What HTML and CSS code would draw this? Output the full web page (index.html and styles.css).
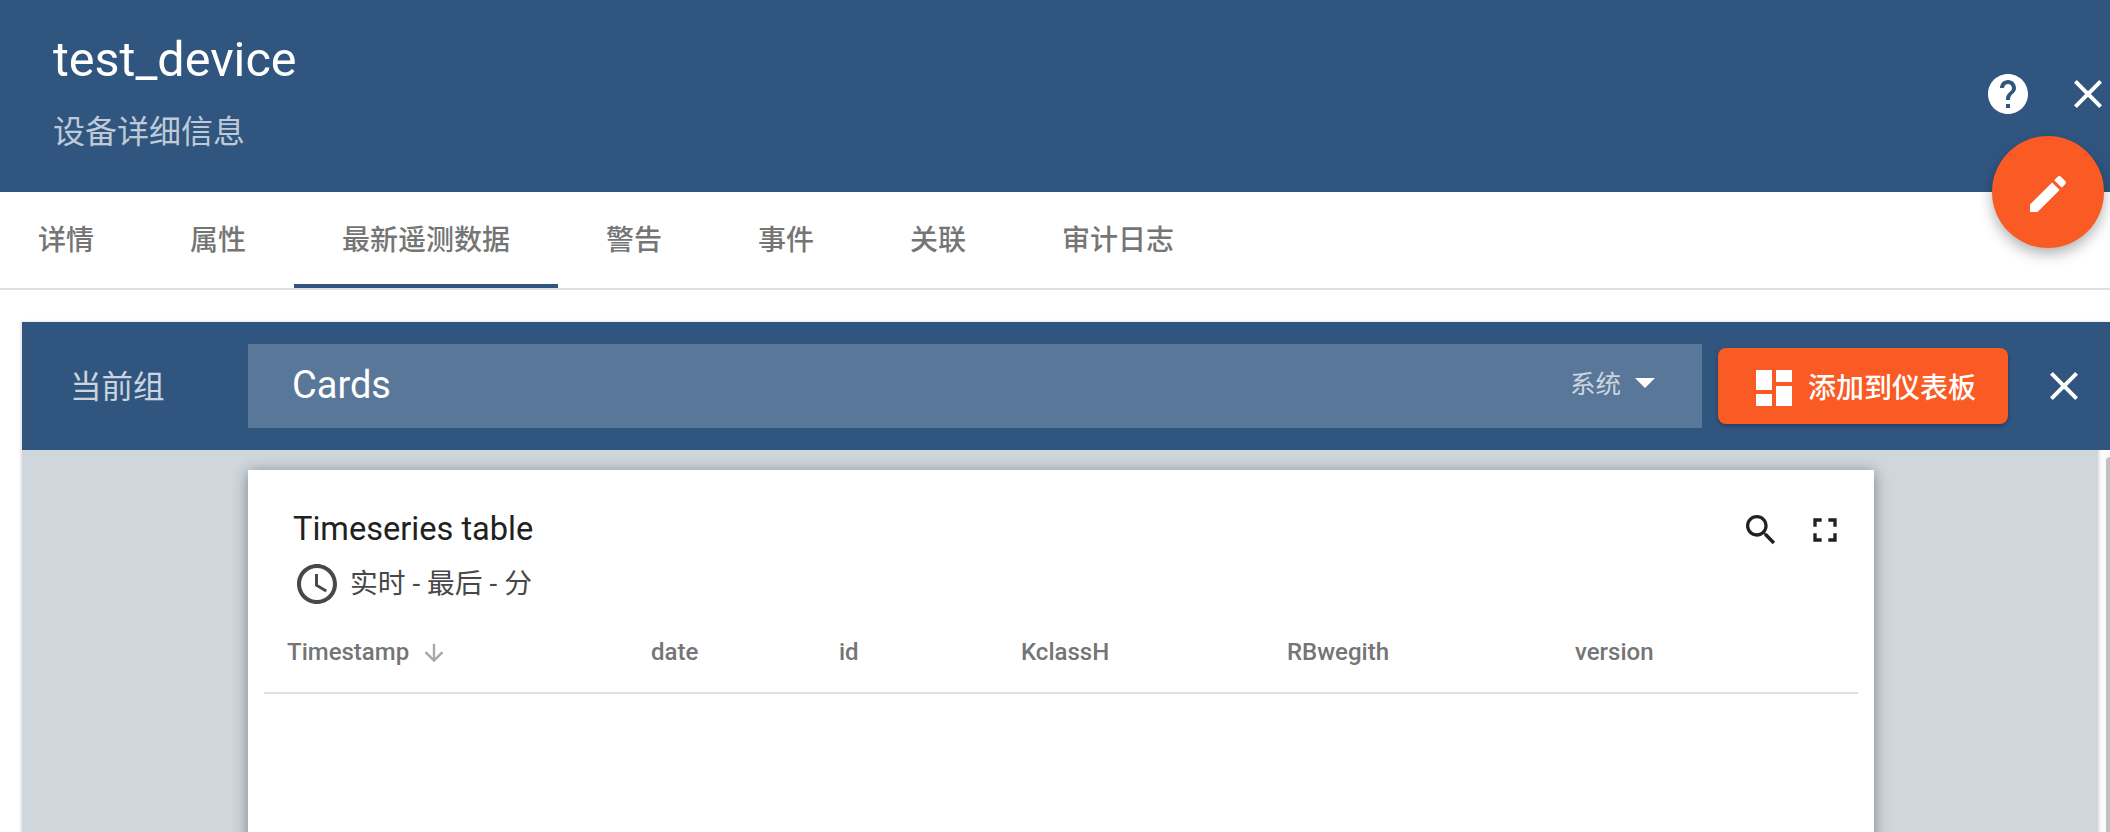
FILE: index.html
```html
<!DOCTYPE html>
<html>
<head>
    <title>test_device</title>
    <link rel="stylesheet" href="styles.css">
</head>
<body>
    <div class="page">
        <header class="header">
            <h1 class="title">test_device</h1>
            <div class="subtitle">设备详细信息</div>
            <div class="header-actions">
                <svg class="icon-48" viewBox="0 0 24 24"><path d="M12 2C6.48 2 2 6.48 2 12s4.48 10 10 10 10-4.48 10-10S17.52 2 12 2zm1 17h-2v-2h2v2zm2.07-7.75l-.9.92C13.45 12.9 13 13.5 13 15h-2v-.5c0-1.1.45-2.1 1.17-2.83l1.24-1.26c.37-.36.59-.86.59-1.41 0-1.1-.9-2-2-2s-2 .9-2 2H8c0-2.21 1.79-4 4-4s4 1.79 4 4c0 .88-.36 1.68-.93 2.25z"/></svg>
                <svg class="icon-48 close-icon" viewBox="0 0 24 24"><path d="M19 6.41L17.59 5 12 10.59 6.41 5 5 6.41 10.59 12 5 17.59 6.41 19 12 13.41 17.59 19 19 17.59 13.41 12z"/></svg>
            </div>
            <button class="fab">
                <svg class="icon-48" viewBox="0 0 24 24"><path d="M3 17.25V21h3.75L17.81 9.94l-3.75-3.75L3 17.25zM20.71 7.04c.39-.39.39-1.02 0-1.41l-2.34-2.34c-.39-.39-1.02-.39-1.41 0l-1.83 1.83 3.75 3.75 1.83-1.83z"/></svg>
            </button>
        </header>

        <nav class="tabs">
            <div class="tab">详情</div>
            <div class="tab">属性</div>
            <div class="tab active">最新遥测数据</div>
            <div class="tab">警告</div>
            <div class="tab">事件</div>
            <div class="tab">关联</div>
            <div class="tab">审计日志</div>
        </nav>

        <section class="panel">
            <div class="toolbar">
                <div class="group-label">当前组</div>
                <div class="group-select">
                    <span class="group-name">Cards</span>
                    <span class="group-type">系统</span>
                    <span class="caret"></span>
                </div>
                <button class="add-button">
                    <svg class="icon-48 add-icon" viewBox="0 0 24 24"><path d="M3 13h8V3H3v10zm0 8h8v-6H3v6zm10 0h8V11h-8v10zm0-18v6h8V3h-8z"/></svg>
                    <span>添加到仪表板</span>
                </button>
                <svg class="icon-48 toolbar-close" viewBox="0 0 24 24"><path d="M19 6.41L17.59 5 12 10.59 6.41 5 5 6.41 10.59 12 5 17.59 6.41 19 12 13.41 17.59 19 19 17.59 13.41 12z"/></svg>
            </div>
            <div class="content">
                <div class="canvas">
                    <div class="card">
                        <div class="card-head">
                            <div>
                                <div class="card-title">Timeseries table</div>
                                <div class="card-time">
                                    <svg class="icon-48 clock" viewBox="0 0 24 24"><path d="M11.99 2C6.47 2 2 6.48 2 12s4.47 10 9.99 10C17.52 22 22 17.52 22 12S17.52 2 11.99 2zM12 20c-4.42 0-8-3.58-8-8s3.58-8 8-8 8 3.58 8 8-3.58 8-8 8zm.5-13H11v6l5.25 3.15.75-1.23-4.5-2.67z"/></svg>
                                    <span>实时 - 最后 - 分</span>
                                </div>
                            </div>
                            <div class="card-actions">
                                <svg class="icon-40" viewBox="0 0 24 24"><path d="M15.5 14h-.79l-.28-.27C15.41 12.59 16 11.11 16 9.5 16 5.91 13.09 3 9.5 3S3 5.91 3 9.5 5.91 16 9.5 16c1.61 0 3.09-.59 4.23-1.57l.27.28v.79l5 4.99L20.49 19l-4.99-5zm-6 0C7.01 14 5 11.99 5 9.5S7.01 5 9.5 5 14 7.01 14 9.5 11.99 14 9.5 14z"/></svg>
                                <svg class="icon-40" viewBox="0 0 24 24"><path d="M7 14H5v5h5v-2H7v-3zm-2-4h2V7h3V5H5v5zm12 7h-3v2h5v-5h-2v3zM14 5v2h3v3h2V5h-5z"/></svg>
                            </div>
                        </div>
                        <table class="data-table">
                            <thead>
                                <tr>
                                    <th class="col-ts">Timestamp <svg class="sort-arrow" viewBox="0 0 24 24"><path d="M20 12l-1.41-1.41L13 16.17V4h-2v12.17l-5.58-5.59L4 12l8 8 8-8z"/></svg></th>
                                    <th class="col-date">date</th>
                                    <th class="col-id">id</th>
                                    <th class="col-k">KclassH</th>
                                    <th class="col-rb">RBwegith</th>
                                    <th>version</th>
                                </tr>
                            </thead>
                        </table>
                    </div>
                </div>
                <div class="side-scroll"><div class="thumb"></div></div>
            </div>
        </section>
    </div>
</body>
</html>
```

FILE: styles.css
```css
html, body {
    margin: 0;
    height: 100%;
    overflow: hidden;
}
body {
    font-family: Roboto, "Noto Sans CJK SC", sans-serif;
    background-color: #fff;
}
.page {
    height: 832px;
    display: flex;
    flex-direction: column;
    overflow: hidden;
}
svg {
    display: block;
    fill: currentColor;
}
.icon-48 {
    width: 48px;
    height: 48px;
    flex: none;
}
.icon-40 {
    width: 40px;
    height: 40px;
    flex: none;
}

/* top header */
.header {
    position: relative;
    flex: none;
    height: 192px;
    box-sizing: border-box;
    padding: 32px 0 0 53px;
    background-color: #305680;
    color: #fff;
}
.title {
    margin: 0;
    font-size: 48.5px;
    font-weight: 400;
    line-height: 56px;
}
.subtitle {
    margin-top: 22px;
    font-size: 32px;
    line-height: 44px;
    color: rgba(255,255,255,0.7);
}
.header-actions {
    position: absolute;
    top: 70px;
    right: -2px;
    display: flex;
    gap: 32px;
}
.fab {
    position: absolute;
    top: 136px;
    left: 1992px;
    z-index: 2;
    width: 112px;
    height: 112px;
    padding: 34px 32px 30px;
    border: none;
    border-radius: 50%;
    background-color: #fa5a23;
    color: #fff;
    box-shadow: 0 6px 14px rgba(0,0,0,0.3);
}

/* tabs */
.tabs {
    flex: none;
    display: flex;
    height: 98px;
    box-sizing: border-box;
    border-bottom: 2px solid #e0e0e0;
}
.tab {
    padding: 0 48px;
    font-size: 28px;
    font-weight: 500;
    line-height: 98px;
    color: #757575;
}
.tab:first-child {
    margin-left: -10px;
}
.tab.active {
    height: 92px;
    border-bottom: 4px solid #305680;
}

/* group panel */
.panel {
    flex: 1;
    min-height: 0;
    display: flex;
    flex-direction: column;
    margin: 32px 0 0 22px;
    box-shadow: -1px 0 3px rgba(0,0,0,0.15);
}
.toolbar {
    flex: none;
    display: flex;
    align-items: center;
    height: 128px;
    background-color: #305680;
    color: #fff;
}
.group-label {
    width: 226px;
    box-sizing: border-box;
    padding: 0 0 4px 48px;
    font-size: 31.5px;
    color: rgba(255,255,255,0.75);
}
.group-select {
    display: flex;
    align-items: center;
    width: 1454px;
    height: 84px;
    box-sizing: border-box;
    padding: 0 47px 0 44px;
    background-color: rgba(255,255,255,0.2);
}
.group-name {
    flex: 1;
    padding-bottom: 2px;
    font-size: 38px;
}
.group-type {
    padding-bottom: 10px;
    font-size: 25.5px;
    color: rgba(255,255,255,0.7);
}
.caret {
    margin: 0 0 6px 14px;
    border-style: solid;
    border-width: 10px 10px 0;
    border-color: #fff transparent transparent;
}
.add-button {
    display: flex;
    align-items: center;
    gap: 10px;
    width: 290px;
    height: 76px;
    margin-left: 16px;
    padding: 0 0 0 32px;
    box-sizing: border-box;
    border: none;
    border-radius: 8px;
    background-color: #fa5a23;
    color: #fff;
    font-family: inherit;
    font-size: 28px;
    font-weight: 500;
    box-shadow: 0 2px 4px rgba(0,0,0,0.3);
}
.add-icon {
    margin-top: 4px;
}
.toolbar-close {
    margin-left: 32px;
}

/* dashboard area */
.content {
    flex: 1;
    min-height: 0;
    display: flex;
}
.canvas {
    flex: 1;
    padding: 20px 224px 0 226px;
    background-color: #cfd7dd;
    overflow: hidden;
}
.card {
    height: 600px;
    box-sizing: border-box;
    padding: 37px 16px 0;
    background-color: #fff;
    box-shadow: 0 2px 14px rgba(0,0,0,0.4);
}
.card-head {
    display: flex;
    justify-content: space-between;
    padding-left: 29px;
}
.card-title {
    font-size: 32.6px;
    line-height: 44px;
    color: #212121;
}
.card-time {
    display: flex;
    align-items: center;
    margin-top: 9px;
    font-size: 27.8px;
    line-height: 48px;
    color: #484848;
}
.clock {
    margin-right: 9px;
}
.card-actions {
    display: flex;
    gap: 24px;
    padding-top: 3px;
    padding-right: 13px;
    color: #212121;
}
.data-table {
    width: 1594px;
    margin-top: 6px;
    border-collapse: collapse;
    table-layout: fixed;
}
.data-table th {
    height: 76px;
    padding: 0 0 2px;
    border-bottom: 2px solid #e0e0e0;
    font-size: 24px;
    font-weight: 500;
    text-align: left;
    color: #757575;
}
.col-ts {
    width: 364px;
    padding-left: 23px !important;
}
.col-date {
    width: 188px;
}
.col-id {
    width: 182px;
}
.col-k {
    width: 266px;
}
.col-rb {
    width: 288px;
}
.sort-arrow {
    display: inline-block;
    width: 28px;
    height: 28px;
    margin-left: 5px;
    vertical-align: -7px;
    fill: #a8a8a8;
}
.side-scroll {
    flex: none;
    width: 10px;
    border-left: 2px solid #e8e8e8;
    background-color: #fafafa;
}
.thumb {
    width: 4px;
    height: 400px;
    margin: 7px 0 0 6px;
    border-radius: 4px 0 0 0;
    background-color: #c1c1c1;
}
```
